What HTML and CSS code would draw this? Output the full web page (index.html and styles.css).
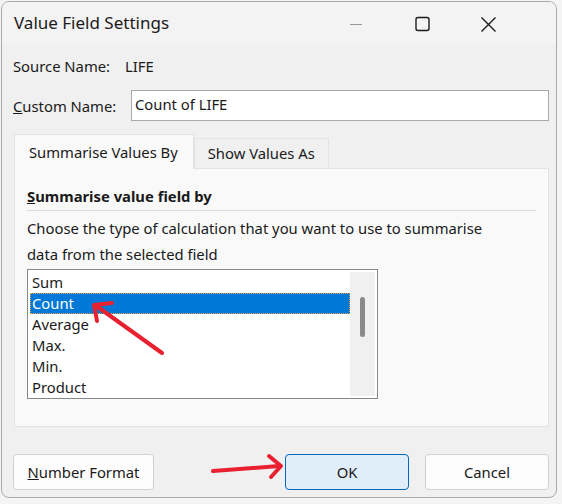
FILE: index.html
```html
<!DOCTYPE html>
<html>
<head>
<meta charset="utf-8">
<link rel="stylesheet" href="styles.css">
</head>
<body>
<div class="window">
  <div class="titlebar">
    <div class="title">Value Field Settings</div>
    <div class="controls">
      <svg class="ctl" width="66" height="44" viewBox="0 0 66 44"><line x1="27" y1="22.5" x2="39" y2="22.5" stroke="#9a9a9a" stroke-width="1"/></svg>
      <svg class="ctl" width="66" height="44" viewBox="0 0 66 44"><rect x="27" y="15.5" width="13" height="13" rx="2" fill="none" stroke="#1a1a1a" stroke-width="1.4"/></svg>
      <svg class="ctl" width="66" height="44" viewBox="0 0 66 44"><path d="M26.5 15.5 L40.5 29.5 M40.5 15.5 L26.5 29.5" stroke="#1a1a1a" stroke-width="1.4"/></svg>
    </div>
  </div>
  <div class="content">
    <div class="row source">
      <span class="label">Source Name:</span>
      <span class="value">LIFE</span>
    </div>
    <div class="row custom">
      <span class="label"><u>C</u>ustom Name:</span>
      <div class="input">Count of LIFE</div>
    </div>
    <div class="tabs">
      <div class="tab active">Summarise Values By</div>
      <div class="tab">Show Values As</div>
    </div>
    <div class="panel">
      <div class="heading"><u>S</u>ummarise value field by</div>
      <div class="sep"></div>
      <p class="desc">Choose the type of calculation that you want to use to summarise data from the selected field</p>
      <div class="listbox">
        <div class="items">
          <div class="item">Sum</div>
          <div class="item selected">Count</div>
          <div class="item">Average</div>
          <div class="item">Max.</div>
          <div class="item">Min.</div>
          <div class="item">Product</div>
        </div>
        <div class="scrollbar"><div class="thumb"></div></div>
      </div>
    </div>
    <div class="buttons">
      <div class="btn numfmt"><u>N</u>umber Format</div>
      <div class="spacer"></div>
      <div class="btn ok">OK</div>
      <div class="btn cancel">Cancel</div>
    </div>
  </div>
  <svg class="arrows" width="562" height="504" viewBox="0 0 562 504">
    <g stroke="#e8202f" stroke-width="4" stroke-linecap="round" stroke-linejoin="round" fill="none">
      <path d="M161 352 L94 304"/>
      <path d="M96 320 L93 304 L111 302"/>
      <path d="M212 470 L278 465"/>
      <path d="M268 455 L280 465 L270 476"/>
    </g>
  </svg>
</div>
</body>
</html>
```
FILE: styles.css
```css
html, body { margin: 0; padding: 0; }
body {
  width: 562px;
  height: 504px;
  background: #f4f4f4;
  font-family: "Noto Sans", "Open Sans", sans-serif;
  font-size: 14.8px;
  color: #1a1a1a;
  overflow: hidden;
}
.window {
  position: relative;
  box-sizing: border-box;
  width: 556px;
  height: 497px;
  margin: 1px 0 0 1px;
  border: 1px solid #a9a9a9;
  border-radius: 8px;
  background: #f0f0f0;
  overflow: hidden;
}
.titlebar {
  height: 43px;
  background: #f3f3f3;
  display: flex;
  align-items: center;
  justify-content: space-between;
}
.title {
  padding-left: 12px;
  font-size: 17px;
  padding-bottom: 2px;
}
.controls { display: flex; align-items: center; margin-right: 35px; }
.ctl { display: block; }
.content {
  padding: 0 7px 0 11px;
}
.row { display: flex; align-items: center; }
.source { height: 35px; padding-top: 7px; box-sizing: border-box; }
.source .label { width: 112px; }
.custom { height: 33px; margin-top: 9px; }
.custom .label { width: 118px; }
.input {
  flex: 1;
  height: 31px;
  box-sizing: border-box;
  border: 1px solid #a9a9a9;
  background: #fff;
  padding: 3px 0 0 3px;
}
.tabs {
  display: flex;
  align-items: flex-end;
  margin-top: 11px;
  margin-left: 1px;
  height: 35px;
}
.tab {
  box-sizing: border-box;
  border: 1px solid #e3e3e3;
  border-bottom: none;
  background: #f0f0f0;
  height: 30px;
  padding: 4px 13px 0 13px;
}
.tab.active {
  height: 35px;
  background: #f9f9f9;
  padding: 7px 15px 0 14px;
  position: relative;
  z-index: 1;
  margin-bottom: -1px;
}
.panel {
  box-sizing: border-box;
  width: 535px;
  height: 259px;
  margin-left: 1px;
  border: 1px solid #e3e3e3;
  background: #f9f9f9;
  padding: 15px 11px 0 12px;
}
.heading { font-weight: bold; height: 24px; line-height: 24px; }
.sep { height: 1px; background: #dcdcdc; margin-top: 2px; width: 509px; }
.desc { margin: 4px 0 0 0; line-height: 26px; width: 470px; }
.listbox {
  margin-top: 2px;
  width: 351px;
  height: 130px;
  box-sizing: border-box;
  border: 1px solid #85878f;
  background: #fff;
  display: flex;
  padding: 2px;
}
.items { flex: 1; }
.item {
  height: 21px;
  line-height: 21px;
  padding-left: 2px;
}
.item.selected {
  background: #0078d7;
  color: #fff;
  outline: 1px dotted #f0a040;
  outline-offset: -1px;
}
.scrollbar {
  width: 25px;
  background: #f0f0f0;
  display: flex;
  justify-content: center;
}
.thumb {
  width: 5px;
  height: 40px;
  margin-top: 25px;
  border-radius: 3px;
  background: #8a8a8a;
}
.buttons {
  display: flex;
  margin-top: 27px;
}
.btn {
  box-sizing: border-box;
  height: 36px;
  border: 1px solid #d0d0d0;
  border-radius: 4px;
  background: #fdfdfd;
  display: flex;
  align-items: center;
  justify-content: center;
}
.numfmt { width: 141px; }
.spacer { flex: 1; }
.ok {
  width: 124px;
  background: #e0eef9;
  border-color: #0067c0;
  margin-right: 16px;
}
.cancel { width: 124px; }
.arrows {
  position: absolute;
  left: -1px;
  top: -1px;
  pointer-events: none;
}
```
